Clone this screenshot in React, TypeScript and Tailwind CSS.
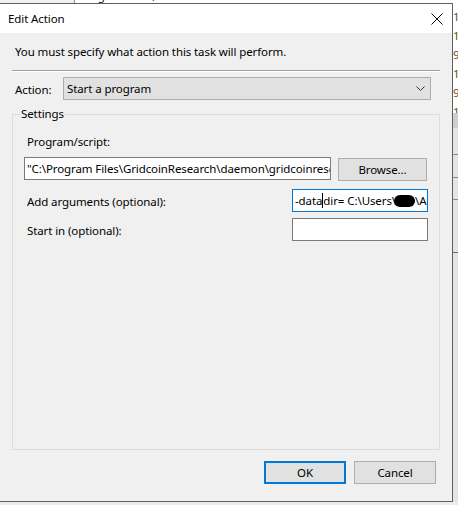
import React from "react";

export default function App() {
  return (
    <div className="w-[458px] h-[505px] overflow-hidden bg-[#ececec] flex flex-col text-[11.5px] tracking-[-0.1px] text-black font-['Noto_Sans',sans-serif]">
      {/* background app strip on top */}
      <div className="h-[3px] flex overflow-hidden bg-white">
        <div className="w-[75px] h-[3px] bg-[#f0f0f0] border-r border-[#8a8a8a]" />
        <div className="flex-1 overflow-hidden">
          <div className="mt-[-10px] leading-[12px] pl-[10px] whitespace-nowrap text-[#222] flex justify-between">
            <span>Log: General, Event ID: 11</span>
            <span className="pr-[2px] text-[#503070]">10/14/2020 1</span>
          </div>
        </div>
      </div>

      <div className="flex">
        {/* dialog */}
        <div className="w-[453px] h-[499px] flex flex-col border-t border-r border-b border-[#5f5f5f] bg-[#f0f0f0]">
          {/* title bar */}
          <div className="h-[29px] bg-white flex items-center justify-between">
            <span className="pl-[8px] leading-[16px]">Edit Action</span>
            <svg width="12" height="12" viewBox="0 0 12 12" className="mr-[9px]">
              <path d="M0.5 0.5 L11.5 11.5 M11.5 0.5 L0.5 11.5" stroke="#000" strokeWidth="1" fill="none" />
            </svg>
          </div>

          {/* body */}
          <div className="flex-1 flex flex-col">
            <p className="mt-[11px] pl-[15px] leading-[16px]">You must specify what action this task will perform.</p>
            <div className="mt-[10px] ml-[12px] w-[428px] h-[2px] border-t border-[#a0a0a0] border-b border-b-white" />

            <div className="mt-[5px] flex items-center h-[23px]">
              <span className="pl-[15px] w-[63px] leading-[16px] pt-[2px]">Action:</span>
              <div className="w-[368px] h-[23px] bg-[#e1e1e1] border border-[#adadad] flex items-center justify-between pl-[3px] pr-[5px]">
                <span className="leading-[16px]">Start a program</span>
                <svg width="9" height="6" viewBox="0 0 9 6">
                  <path d="M0.5 0.5 L4.5 4.5 L8.5 0.5" stroke="#333" strokeWidth="1" fill="none" />
                </svg>
              </div>
            </div>

            <fieldset className="mt-[6px] ml-[12px] w-[428px] h-[344px] border border-[#dcdcdc] flex flex-col">
              <legend className="ml-[7px] px-[1px] leading-[16px]">Settings</legend>
              <div className="mt-[12px] pl-[14px] leading-[16px]">Program/script:</div>
              <div className="mt-[7px] flex items-start pl-[11px]">
                <div className="w-[307px] h-[23px] bg-white border border-[#7a7a7a] overflow-hidden whitespace-nowrap pl-[2px] leading-[21px]">
                  "C:\Program Files\GridcoinResearch\daemon\gridcoinresearchd.exe"
                </div>
                <div className="ml-[7px] mt-[1px] w-[89px] h-[23px] bg-[#e1e1e1] border border-[#adadad] flex items-center justify-center leading-[16px]">
                  Browse...
                </div>
              </div>
              <div className="mt-[8px] flex items-center">
                <span className="w-[279px] pl-[14px] leading-[16px] pt-[2px]">Add arguments (optional):</span>
                <div className="w-[136px] h-[23px] bg-white border border-[#0078d7] overflow-hidden whitespace-nowrap pl-[2px] leading-[21px] flex items-center">
                  <span>-data</span>
                  <span className="inline-block w-[1px] h-[15px] bg-black shrink-0" />
                  <span>dir=</span>
                  <span className="ml-[3px]">C:\Users\</span>
                  <span className="inline-block w-[21px] h-[12px] rounded-full bg-black ml-[-2px] shrink-0" />
                  <span>\AppData</span>
                </div>
              </div>
              <div className="mt-[6px] flex items-center">
                <span className="w-[279px] pl-[14px] leading-[16px] pt-[2px]">Start in (optional):</span>
                <div className="w-[136px] h-[23px] bg-white border border-[#7a7a7a]" />
              </div>
            </fieldset>

            <div className="mt-[11px] flex justify-end gap-[8px] pr-[16px]">
              <div className="w-[82px] h-[23px] bg-[#e1e1e1] border-2 border-[#0078d7] flex items-center justify-center leading-[16px]">
                OK
              </div>
              <div className="w-[82px] h-[23px] bg-[#e1e1e1] border border-[#adadad] flex items-center justify-center leading-[16px]">
                Cancel
              </div>
            </div>
          </div>
        </div>

        {/* background app strip on right */}
        <div className="w-[5px] h-[499px] flex flex-col overflow-hidden bg-white">
          <div className="h-[110px] overflow-hidden leading-[19px] text-[#6a4a20] pt-[4px]">
            <div>1</div>
            <div>1</div>
            <div>9</div>
            <div>1</div>
            <div>9</div>
            <div>1</div>
          </div>
          <div className="h-[15px] bg-[#cfcfcf]" />
          <div className="flex-1 bg-[#e4e4e4] flex flex-col">
            <div className="mt-[26px] h-[1px] bg-[#8a8a8a]" />
            <div className="mt-[22px] h-[1px] bg-[#8a8a8a]" />
            <div className="mt-[21px] h-[1px] bg-[#8a8a8a]" />
            <div className="mt-[52px] h-[1px] bg-[#6a6a6a]" />
          </div>
        </div>
      </div>
    </div>
  );
}
